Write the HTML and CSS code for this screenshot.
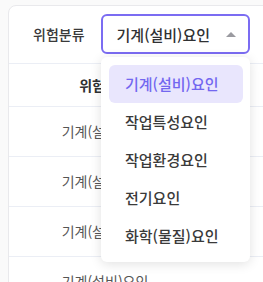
FILE: index.html
```html
<!DOCTYPE html>
<html lang="ko">
<head>
    <meta charset="UTF-8">
    <title>위험분류</title>
    <link rel="stylesheet" href="styles.css">
</head>
<body>
    <div class="panel">
        <div class="filter-bar">
            <span class="filter-label">위험분류</span>
            <div class="select">
                <span class="select-value">기계(설비)요인</span>
                <span class="select-caret"></span>
            </div>
            <ul class="select-menu">
                <li class="option selected">기계(설비)요인</li>
                <li class="option">작업특성요인</li>
                <li class="option">작업환경요인</li>
                <li class="option">전기요인</li>
                <li class="option">화학(물질)요인</li>
            </ul>
        </div>

        <table class="risk-table">
            <thead>
                <tr>
                    <th class="col-type">위험분류</th>
                    <th></th>
                </tr>
            </thead>
            <tbody>
                <tr><td class="col-type">기계(설비)요인</td><td></td></tr>
                <tr><td class="col-type">기계(설비)요인</td><td></td></tr>
                <tr><td class="col-type">기계(설비)요인</td><td></td></tr>
                <tr><td class="col-type">기계(설비)요인</td><td></td></tr>
            </tbody>
        </table>
    </div>
</body>
</html>
```

FILE: styles.css
```css
* {
    margin: 0;
    padding: 0;
    box-sizing: border-box;
}

html, body {
    overflow: hidden;
}

body {
    font-family: "Noto Sans CJK KR", "Noto Sans", sans-serif;
    background-color: #fafafa;
    color: #303133;
    padding: 5px 0 0 8px;
}

.panel {
    width: 420px;
    background: #fff;
    border: 1px solid #e9e9ec;
    border-radius: 8px;
}

/* 필터 영역 */
.filter-bar {
    position: relative;
    display: flex;
    align-items: center;
    gap: 16px;
    padding: 8px 24px 9px 24px;
    border-bottom: 1px solid #ebeef5;
}

.filter-label {
    font-size: 14px;
    font-weight: 500;
    color: #3a3a3a;
}

.select {
    display: flex;
    align-items: center;
    justify-content: space-between;
    width: 149px;
    height: 40px;
    padding: 0 12px 0 14px;
    border: 2px solid #7b6cf2;
    border-radius: 6px;
    background: #fff;
}

.select-value {
    font-size: 15px;
    font-weight: 500;
    color: #303133;
}

.select-caret {
    width: 0;
    height: 0;
    border-left: 5px solid transparent;
    border-right: 5px solid transparent;
    border-bottom: 5px solid #9a9aa0;
}

.select-menu {
    position: absolute;
    top: 51px;
    left: 92px;
    width: 149px;
    padding: 8px 7px 7px 8px;
    list-style: none;
    background: #fff;
    border-radius: 6px;
    box-shadow: 0 2px 12px rgba(0, 0, 0, 0.12);
    z-index: 10;
}

.option {
    height: 38px;
    line-height: 38px;
    padding-left: 16px;
    font-size: 15px;
    font-weight: 500;
    color: #3a3a3a;
    border-radius: 6px;
}

.option.selected {
    background: #e9e6fd;
    color: #7367f0;
}

/* 테이블 */
.risk-table {
    width: 100%;
    border-collapse: collapse;
    font-size: 14px;
}

.risk-table th,
.risk-table td {
    border-bottom: 1px solid #ebeef5;
}

.risk-table th {
    height: 42px;
    font-weight: bold;
    color: #303133;
}

.risk-table td {
    height: 50px;
    color: #555;
}

.col-type {
    width: 192px;
    text-align: center;
}
```
